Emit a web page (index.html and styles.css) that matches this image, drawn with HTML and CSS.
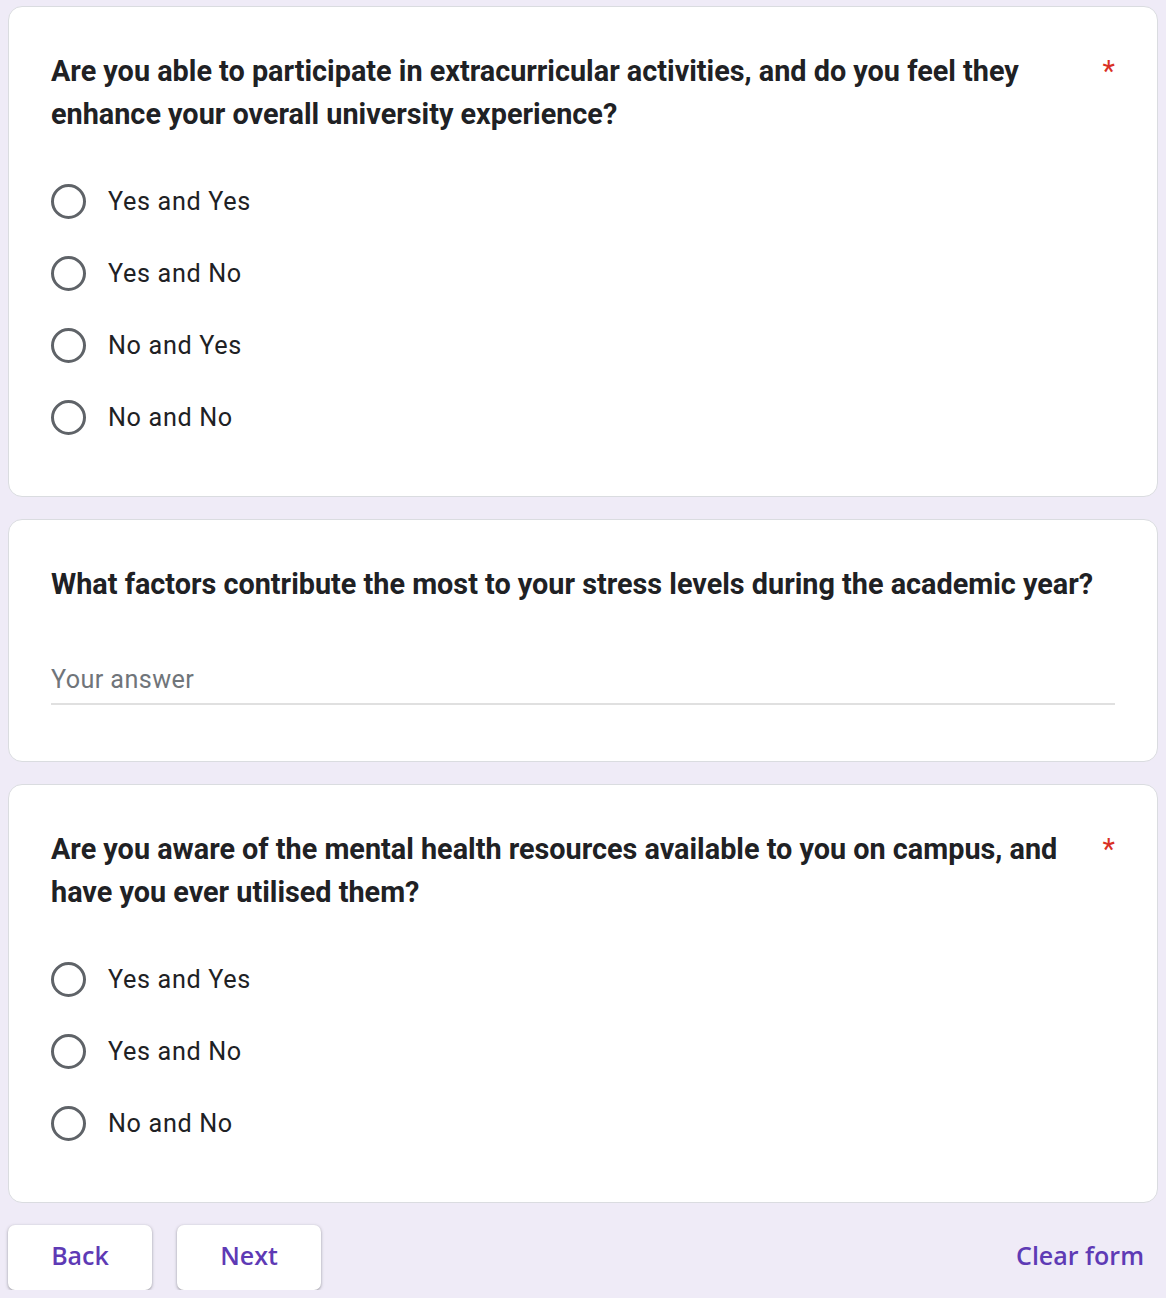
FILE: index.html
```html
<!DOCTYPE html>
<html lang="en">
<head>
<meta charset="utf-8">
<title>Form</title>
<link rel="stylesheet" href="styles.css">
</head>
<body>
<main class="page">
  <section class="card">
    <div class="q-head">
      <h2 class="q-title">Are you able to participate in extracurricular activities, and do you feel they enhance your overall university experience?</h2>
      <span class="req">*</span>
    </div>
    <div class="options">
      <label class="opt"><span class="radio"></span><span class="opt-text">Yes and Yes</span></label>
      <label class="opt"><span class="radio"></span><span class="opt-text">Yes and No</span></label>
      <label class="opt"><span class="radio"></span><span class="opt-text">No and Yes</span></label>
      <label class="opt"><span class="radio"></span><span class="opt-text">No and No</span></label>
    </div>
  </section>

  <section class="card">
    <div class="q-head">
      <h2 class="q-title">What factors contribute the most to your stress levels during the academic year?</h2>
    </div>
    <div class="answer">
      <div class="answer-field">Your answer</div>
    </div>
  </section>

  <section class="card">
    <div class="q-head">
      <h2 class="q-title">Are you aware of the mental health resources available to you on campus, and have you ever utilised them?</h2>
      <span class="req">*</span>
    </div>
    <div class="options">
      <label class="opt"><span class="radio"></span><span class="opt-text">Yes and Yes</span></label>
      <label class="opt"><span class="radio"></span><span class="opt-text">Yes and No</span></label>
      <label class="opt"><span class="radio"></span><span class="opt-text">No and No</span></label>
    </div>
  </section>

  <div class="footer">
    <div class="nav">
      <button class="btn">Back</button>
      <button class="btn">Next</button>
    </div>
    <button class="clear">Clear form</button>
  </div>
</main>
</body>
</html>
```

FILE: styles.css
```css
* { box-sizing: border-box; }
html, body { margin: 0; padding: 0; }
body {
  background: #efebf7;
  font-family: Roboto, "Liberation Sans", Arial, sans-serif;
  color: #202124;
}
.page {
  padding: 6px 8px 0 8px;
  display: flex;
  flex-direction: column;
  gap: 22px;
}
.card {
  background: #fff;
  border: 1px solid #dadce0;
  border-radius: 14px;
  padding: 43px 42px 42px 42px;
}
.q-head {
  display: flex;
  align-items: flex-start;
}
.q-title {
  flex: 1;
  margin: 0;
  font-size: 28.8px;
  line-height: 43.2px;
  font-weight: 700;
  color: #202124;
}
.req {
  margin-left: 32px;
  color: #d93025;
  font-size: 28.8px;
  line-height: 43.2px;
  font-weight: 400;
}
.options {
  margin-top: 29px;
  margin-bottom: 1px;
  display: flex;
  flex-direction: column;
}
.opt {
  height: 72px;
  display: flex;
  align-items: center;
}
.radio {
  width: 35px;
  height: 35px;
  border: 3px solid #5f6368;
  border-radius: 50%;
  flex: none;
}
.opt-text {
  margin-left: 22px;
  font-size: 25.2px;
  letter-spacing: 0.65px;
  color: #202124;
}
.answer {
  margin-top: 55px;
  margin-bottom: 14px;
}
.answer-field {
  font-size: 25.2px;
  letter-spacing: 0.4px;
  line-height: 36px;
  color: #70757a;
  padding-bottom: 5px;
  border-bottom: 2px solid #e0e0e0;
}
.footer {
  display: flex;
  justify-content: space-between;
  align-items: center;
  padding-right: 14px;
}
.nav {
  display: flex;
  gap: 25px;
}
.btn {
  width: 144px;
  height: 65px;
  border: none;
  background: #fff;
  border-radius: 7px;
  box-shadow: 0 1px 2px rgba(60,64,67,.3), 0 1px 3px 1px rgba(60,64,67,.15);
  font-family: "Open Sans", Lato, sans-serif;
  font-weight: 600;
  font-size: 25px;
  color: #5e3ab5;
  padding: 0 0 5px 0;
}
.clear {
  border: none;
  background: transparent;
  font-family: "Open Sans", Lato, sans-serif;
  font-weight: 600;
  font-size: 25px;
  color: #5e3ab5;
  padding: 0 0 5px 0;
}
```
